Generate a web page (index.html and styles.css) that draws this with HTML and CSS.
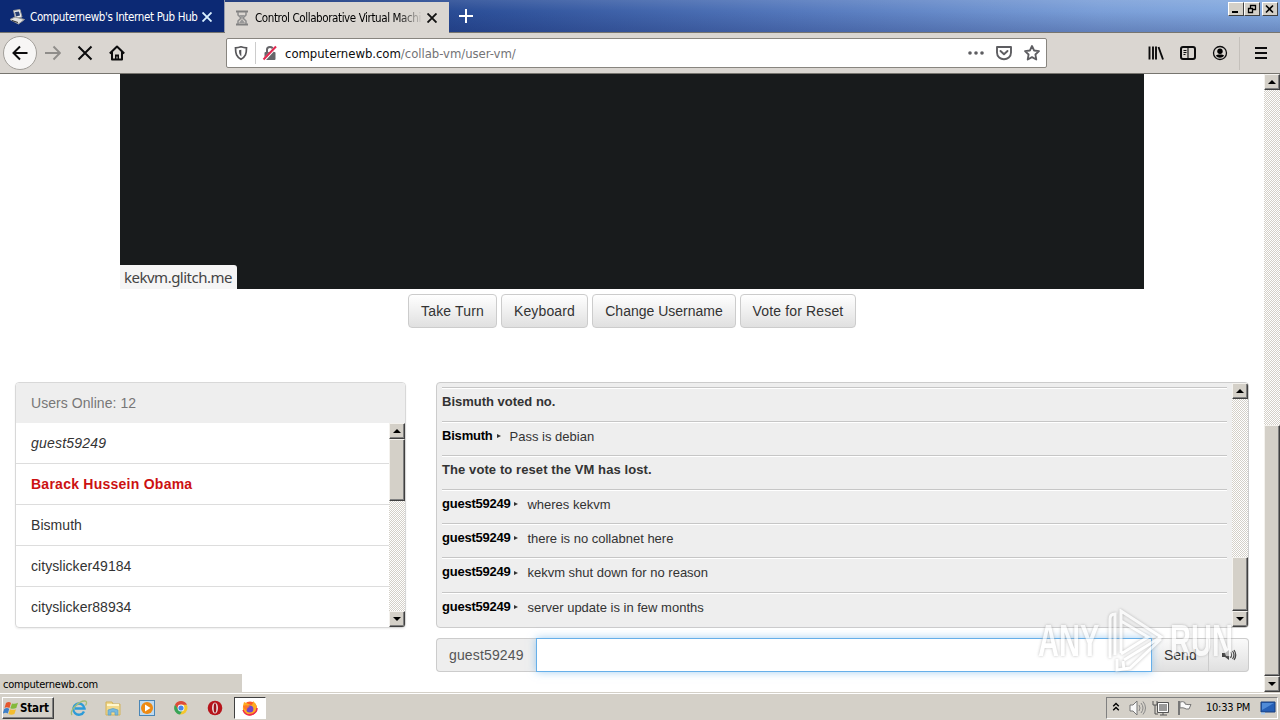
FILE: index.html
```html
<!DOCTYPE html>
<html lang="en">
<head>
<meta charset="utf-8">
<title>Control Collaborative Virtual Machines</title>
<link rel="stylesheet" href="styles.css">
</head>
<body>
<header class="tabs">
  <div class="tab tab-idle">
    <svg class="ico16" viewBox="0 0 16 16"><path d="M4.500 1.500l6.500-1 2 7.500-6.500 1.500z" fill="#f4f4f4" stroke="#999"/><path d="M6 3l4-.6 1 4.200-4 .9z" fill="#263e72"/><path d="M1 10.500l5-2.500 9.500 2.500-6 4.500z" fill="#e2e2e2" stroke="#999"/><path d="M3 11.500l6 2" stroke="#333"/></svg>
    <span class="tab-title t-one">Computernewb's Internet Pub Hub</span>
    <svg class="close" viewBox="0 0 10 10"><path d="M.5 .5l9 9M9.500 .5l-9 9" stroke="#d9f0ff" stroke-width="1.900"/></svg>
  </div>
  <div class="tab tab-on">
    <svg class="ico16" viewBox="0 0 16 16"><path d="M2 1.500h12M2 14.500h12" stroke="#808080" stroke-width="2"/><path d="M4 2v3l3 3-3 3v3M12 2v3L9 8l3 3v3" fill="none" stroke="#8c8c8c" stroke-width="1.500"/><path d="M5 5h6L8 8zM8 9l3 4H5z" fill="#999"/></svg>
    <span class="tab-title t-two">Control Collaborative Virtual Machi</span>
    <svg class="close" viewBox="0 0 10 10"><path d="M.5 .5l9 9M9.500 .5l-9 9" stroke="#111" stroke-width="1.900"/></svg>
  </div>
  <svg class="plus" viewBox="0 0 14 14"><path d="M7 0v14M0 7h14" stroke="#fff" stroke-width="2"/></svg>
  <div class="winbtns">
    <i class="wb"><svg viewBox="0 0 13 12"><path d="M3 9h6" stroke="#000" stroke-width="2"/></svg></i>
    <i class="wb"><svg viewBox="0 0 13 12"><path d="M5.500 5V2.500h5v4H8M5 2.500h6M3.500 5.500h4v4h-4zM3 5.500h5" fill="none" stroke="#000" stroke-width="1.300"/></svg></i>
    <i class="wb wb-x"><svg viewBox="0 0 13 12"><path d="M3 2.500l7 7M10 2.500l-7 7" stroke="#000" stroke-width="1.600"/></svg></i>
  </div>
</header>

<nav class="toolbar">
  <div class="back"><svg viewBox="0 0 16 16"><path d="M15.500 8H1.500M8 1.500L1.500 8 8 14.500" fill="none" stroke="#0c0c0d" stroke-width="2"/></svg></div>
  <svg class="ico16 fwd" viewBox="0 0 16 16"><path d="M0 8h14.500M8.500 1.500L15 8l-6.500 6.500" fill="none" stroke="#8f8d8a" stroke-width="1.900"/></svg>
  <svg class="ico16 stop" viewBox="0 0 16 16"><path d="M1.500 1.500l13 13M14.500 1.500l-13 13" stroke="#0c0c0d" stroke-width="2"/></svg>
  <svg class="ico16 home" viewBox="0 0 16 16"><path d="M.8 8.500L8 1.500l7.200 7M3 7v7.500h10V7" fill="none" stroke="#0c0c0d" stroke-width="2" stroke-linejoin="round"/><path d="M6 14V9.500h4V14" fill="#0c0c0d"/><path d="M8 11.500v2" stroke="#dad6d1"/></svg>
  <div class="urlbar">
    <svg class="shield" viewBox="0 0 14 16"><path d="M7 1.800c2 .7 3.500 1 5.500 1 0 6-1 9-5.500 11.500C2.500 11.800 1.500 8.800 1.500 2.800c2 0 3.500-.3 5.500-1z" fill="none" stroke="#57575a" stroke-width="1.700"/><path d="M7.300 4.800v6.700C5.500 10 5 8 5 5.200z" fill="#57575a"/></svg>
    <i class="url-sep"></i>
    <svg class="lock" viewBox="0 0 16 16"><path d="M5 7V4.500C5 1 11 1 11 4.500V7" fill="none" stroke="#66666a" stroke-width="2"/><rect x="2.500" y="7" width="11" height="8" rx="1" fill="#66666a"/><path d="M1.500 15.500L14.500 1.500" stroke="#fff" stroke-width="3"/><path d="M1.500 14.500L14 1.500" stroke="#e22850" stroke-width="2"/></svg>
    <span class="url">computernewb.com<span class="path">/collab-vm/user-vm/</span></span>
    <svg class="dots" viewBox="0 0 16 4"><circle cx="2" cy="2" r="1.800"/><circle cx="8" cy="2" r="1.800"/><circle cx="14" cy="2" r="1.800"/></svg>
    <svg class="ico16" viewBox="0 0 16 16"><path d="M1 2h14v5.500c0 9-14 9-14 0zM4.500 6L8 9.300 11.500 6" fill="none" stroke="#5d5d61" stroke-width="1.900" stroke-linejoin="round" stroke-linecap="round"/></svg>
    <svg class="ico16 star" viewBox="0 0 16 16"><path d="M8 1l2.100 4.500 4.900.6-3.600 3.400.9 5L8 12.100 3.700 14.500l.9-5L1 6.100l4.900-.6z" fill="none" stroke="#5d5d61" stroke-width="1.800" stroke-linejoin="round"/></svg>
  </div>
  <svg class="ico16 lib" viewBox="0 0 16 16"><path d="M1.500 1.500v13M5 1.500v13M8 1.500v13" stroke="#0c0c0d" stroke-width="1.900"/><path d="M10.500 2L15 14.500" stroke="#0c0c0d" stroke-width="1.900"/></svg>
  <svg class="ico16 side" viewBox="0 0 16 16"><rect x="1" y="2" width="14" height="12" rx="2" fill="none" stroke="#0c0c0d" stroke-width="2"/><path d="M8 2v12M3.500 5.500h3M3.500 7.500h3M3.500 9.500h2" stroke="#0c0c0d" stroke-width="1.100"/></svg>
  <svg class="ico16 acct" viewBox="0 0 16 16"><circle cx="8" cy="8" r="6.500" fill="none" stroke="#0c0c0d" stroke-width="1.300"/><circle cx="8" cy="6.300" r="2.700"/><path d="M3.800 10.600c1-1.600 7.400-1.600 8.400 0-2.300 3-6.100 3-8.400 0z"/></svg>
  <i class="tb-sep"></i>
  <svg class="ico16 menu" viewBox="0 0 16 16"><path d="M2 3h12M2 8h12M2 13h12" stroke="#0c0c0d" stroke-width="2"/></svg>
</nav>

<div class="viewport">
  <main class="page">
    <div class="display"><span class="vm-status">kekvm.glitch.me</span></div>
    <div class="actions">
      <button class="btn b1">Take Turn</button>
      <button class="btn b2">Keyboard</button>
      <button class="btn b3">Change Username</button>
      <button class="btn b4">Vote for Reset</button>
    </div>
    <div class="columns">
      <section class="users">
        <div class="users-head">Users Online: 12</div>
        <div class="users-body">
          <div class="users-list">
            <div class="user me">guest59249</div>
            <div class="user admin">Barack Hussein Obama</div>
            <div class="user">Bismuth</div>
            <div class="user">cityslicker49184</div>
            <div class="user">cityslicker88934</div>
          </div>
          <div class="sb"><i class="sb-btn up"></i><i class="sb-thumb thumb-users"></i><i class="sb-gap"></i><i class="sb-btn down"></i></div>
        </div>
      </section>
      <section class="chatcol">
        <div class="chat">
          <div class="messages">
            <div class="msg"><b>Bismuth voted no.</b></div>
            <div class="msg"><b class="who short">Bismuth</b><i class="arrow"></i><span>Pass is debian</span></div>
            <div class="msg"><b class="result">The vote to reset the VM has lost.</b></div>
            <div class="msg"><b class="who">guest59249</b><i class="arrow"></i><span>wheres kekvm</span></div>
            <div class="msg"><b class="who">guest59249</b><i class="arrow"></i><span>there is no collabnet here</span></div>
            <div class="msg tall"><b class="who">guest59249</b><i class="arrow"></i><span>kekvm shut down for no reason</span></div>
            <div class="msg"><b class="who">guest59249</b><i class="arrow"></i><span>server update is in few months</span></div>
          </div>
          <div class="sb"><i class="sb-btn up"></i><i class="sb-gap"></i><i class="sb-thumb thumb-chat"></i><i class="sb-btn down"></i></div>
        </div>
        <div class="compose">
          <span class="addon">guest59249</span>
          <span class="field"></span>
          <span class="send">Send</span>
          <span class="sound"><svg viewBox="0 0 16 14"><path d="M1 5h3l4-3v10L4 9H1z" fill="#444"/><path d="M9.500 4q2 3 0 6M11.500 3q3 4 0 8M13 2q3.500 5 0 10" fill="none" stroke="#444" stroke-width="1.200"/></svg></span>
        </div>
      </section>
    </div>
    <div class="statusbar">computernewb.com</div>
  </main>
  <div class="sb sb-page"><i class="sb-btn up"></i><i class="sb-gap"></i><i class="sb-thumb thumb-page"></i><i class="sb-btn down"></i></div>
</div>

<div class="watermark">
  <span>ANY</span>
  <svg viewBox="0 0 58 64"><path d="M3 49V10q0-5 5-5v41M14 44V2l40 26-37 23M14 2v10l27 16-27 17M10 50v11l13-2 31-29M17 61l-1-9" /></svg>
  <span>RUN</span>
</div>

<footer class="taskbar">
  <div class="start">
    <svg viewBox="0 0 16 16"><path d="M3 3q3-2 5 0L6.500 8q-3-1.500-5 0z" fill="#e5572d"/><path d="M9 3.500q3 1 6-.8L13.300 8q-3 1.500-6 .3z" fill="#83b93c"/><path d="M1.200 9q3-2 5 0L4.800 13.500q-2-1.500-5 0z" fill="#3e80c8"/><path d="M7 9.200q3 1.300 6 0l-1.600 4.800q-3 1.500-6 0z" fill="#f4bd2f"/></svg>
    <b>Start</b>
  </div>
  <div class="quick">
    <svg viewBox="0 0 18 18"><path d="M14 12.500A5.600 5.600 0 1 1 14.500 9.500H5" fill="none" stroke="#2c9bd8" stroke-width="2.400"/><path d="M2 16C-1 12 9 1.500 15 2c2.500.5 1.500 3 .5 4.500" fill="none" stroke="#a3bd78" stroke-width="1.300"/></svg>
    <svg viewBox="0 0 18 18"><path d="M2 3h6l1 2h7v11H2z" fill="#f3d98b" stroke="#d2b25b"/><path d="M3 6h12" stroke="#fff6cc" stroke-width="2"/><path d="M4 16v-5q5-3 10 0v5h-3v-3H7v3z" fill="#78b9dd" stroke="#5b9dc3" stroke-width=".7"/></svg>
    <svg viewBox="0 0 18 18"><rect x="1.500" y="1.500" width="15" height="15" fill="#bfdaf0" stroke="#4a86b6"/><circle cx="9" cy="9" r="6" fill="#ee8a12"/><path d="M7 5.500L12.500 9 7 12.500z" fill="#fff"/></svg>
    <svg viewBox="0 0 18 18"><circle cx="9" cy="9" r="6.500" fill="#f4c62e"/><path d="M3 5.800A6.700 6.700 0 0 1 15 5.800H9L6 11z" fill="#dd4b3b"/><path d="M3 5.800a6.500 6.500 0 0 0 5 9.700L11.500 10H6z" fill="#37a457"/><circle cx="9" cy="9" r="3.400" fill="#fff"/><circle cx="9" cy="9" r="2.600" fill="#4686e9"/></svg>
    <svg viewBox="0 0 18 18"><circle cx="9" cy="9" r="7.300" fill="#b7141b"/><ellipse cx="9" cy="9" rx="3" ry="5.500" fill="#eadada"/><ellipse cx="9" cy="9" rx="1.300" ry="4.800" fill="#9d1018"/></svg>
    <div class="task-on"><svg viewBox="0 0 18 18"><circle cx="9" cy="9.500" r="7" fill="#ff5a26"/><path d="M3 3Q0 12 5 15q8 3 11-5 0-5-4-8 0 4-2 4z" fill="#ffab20"/><circle cx="8.800" cy="10" r="3.600" fill="#7544c9"/><path d="M2 7q4-2 7 1-3 0-3 3-3 0-4-4z" fill="#ff7928"/><path d="M2 11q3 7 10 4 4-2 4-6" fill="none" stroke="#ee2f4d" stroke-width="1.500"/></svg></div>
  </div>
  <div class="tray">
    <svg class="chev" viewBox="0 0 8 10"><path d="M1.200 4.200L4 1.500l2.800 2.700M1.200 8.200L4 5.500l2.800 2.700" fill="none" stroke="#000" stroke-width="1.400"/></svg>
    <svg viewBox="0 0 18 16"><path d="M2 5h3l4-4v14l-4-4H2z" fill="#f8f8f8" stroke="#777"/><path d="M11 5q2 3 0 6M13 3q4 5 0 10M15 1.500q5 6.500 0 13" fill="none" stroke="#888"/></svg>
    <svg class="net" viewBox="0 0 18 16"><path d="M6.500 3.500h9v8h-9z" fill="#999" stroke="#fff"/><path d="M5.500 2.500h11v10h-11zM8 15h7M11 13v2" fill="none" stroke="#555"/><path d="M1 1v4h4V1M3 5v9h3" fill="none" stroke="#555"/></svg>
    <svg class="flag" viewBox="0 0 18 16"><path d="M3 1v14" stroke="#777" stroke-width="2"/><path d="M4 2q3-1 5 .5V4q3 1 6 .5l-2 4.500q-3 .5-5-1-2-.5-4 0z" fill="#fafafa" stroke="#777"/></svg>
    <span class="clock">10:33 PM</span>
    <svg class="desk" viewBox="0 0 16 14"><path d="M1 1h14v10H1z" fill="#255fb6" stroke="#193e7d"/><path d="M2 2h12L2 9z" fill="#508bd7"/><path d="M1 12.500h4" stroke="#a9cdf2" stroke-width="2"/></svg>
  </div>
</footer>
</body>
</html>
```
FILE: styles.css
```css
* { box-sizing: border-box; }
body {
  margin: 0; width: 1280px; height: 720px; overflow: hidden;
  display: flex; flex-direction: column; position: relative;
  font-family: "Liberation Sans", Arial, sans-serif; background: #fff;
}
i { font-style: normal; display: block; }
svg { display: block; flex: none; }
.ico16 { width: 16px; height: 16px; }

.tabs {
  height: 33px; flex: none; display: flex; border-bottom: 1px solid #77756f;
  background: linear-gradient(rgba(255,255,255,.1), transparent 35%, rgba(10,20,80,.22)), linear-gradient(90deg, #0a246a 0, #0e2b72 225px, #2c4f98 470px, #5579bd 800px, #7b9fd8 1100px, #85abe0 1280px);
  font: 11px "DejaVu Sans Condensed", "DejaVu Sans", sans-serif; font-stretch: condensed;
}
.tab { display: flex; align-items: center; }
.tab-idle { width: 225px; padding: 2px 0 0 9px; color: #fff; background: #0c2974; border-right: 1px solid #969bad; }
.tab-on { width: 224px; margin-top: 2px; height: 31px; padding-left: 9px; background: #dad6d1; color: #000; }
.tab-title { white-space: nowrap; margin-left: 5px; width: 167px; font-size: 11.5px; }
.t-one { letter-spacing: -.35px; }
.t-two { letter-spacing: -.4px; -webkit-mask-image: linear-gradient(90deg, #000 143px, transparent 168px); mask-image: linear-gradient(90deg, #000 143px, transparent 168px); }
.close { width: 10px; height: 10px; margin-left: 5px; }
.plus { width: 14px; height: 14px; margin: 9px 0 0 10px; }
.winbtns { margin-left: auto; display: flex; padding: 2px 2px 0 0; height: 16px; }
.wb { width: 16px; height: 14px; background: #d4d0c8; border: 1px solid; border-color: #fff #404040 #404040 #fff; }
.wb svg { width: 13px; height: 12px; }
.wb-x { margin-left: 2px; }

.toolbar { height: 41px; flex: none; background: #dad6d1; border-bottom: 1px solid #77756f; display: flex; align-items: center; padding-left: 3px; }
.back { width: 34px; height: 34px; border-radius: 50%; background: #f7f6f5; border: 1px solid #a29f9a; display: grid; place-items: center; }
.back svg { width: 16px; height: 16px; }
.fwd { margin-left: 8px; }
.stop { margin-left: 16px; }
.home { margin-left: 16px; }
.urlbar { margin-left: 101px; width: 821px; height: 30px; background: #fff; border: 1px solid #88857f; border-radius: 2px; display: flex; align-items: center; padding: 0 6px 0 7px; }
.shield { width: 14px; height: 16px; }
.url-sep { width: 1px; height: 22px; background: #ccc; margin: 0 6px 0 7px; }
.lock { width: 16px; height: 16px; }
.url { margin-left: 7px; font: 13px "DejaVu Sans Condensed", "DejaVu Sans", sans-serif; color: #0c0c0d; flex: 1; white-space: nowrap; letter-spacing: -.04px; }
.path { color: #737376; }
.dots { width: 16px; height: 4px; fill: #5d5d61; margin-right: 12px; }
.star { margin-left: 12px; }
.lib { margin-left: 101px; }
.side { margin-left: 16px; }
.acct { margin-left: 16px; }
.tb-sep { width: 1px; height: 33px; background: #c4c0bb; margin-left: 11px; }
.menu { margin-left: 13px; }

.viewport { height: 618px; flex: none; display: flex; }
.page { width: 1264px; display: flex; flex-direction: column; background: #fff; }
.display { width: 1024px; height: 215px; margin-left: 120px; background: #181b1c; display: flex; align-items: flex-end; flex: none; }
.vm-status { width: 117px; height: 24px; padding-left: 4px; background: #f5f5f5; color: #444; border-top-right-radius: 3px; font: 15px/25px "Noto Sans", sans-serif; white-space: nowrap; letter-spacing: -.5px; }
.actions { display: flex; justify-content: center; gap: 4px; margin-top: 5px; }
.btn { height: 34px; padding: 0; font: 14px "Liberation Sans", Arial, sans-serif; color: #333; background: linear-gradient(#fff, #e0e0e0); border: 1px solid #ccc; border-radius: 4px; white-space: nowrap; letter-spacing: .15px; }
.b1 { width: 89px; } .b2 { width: 87px; } .b3 { width: 144px; letter-spacing: 0; } .b4 { width: 116px; }

.columns { display: flex; padding-left: 15px; margin-top: 54px; gap: 30px; }
.users { width: 391px; height: 246px; border: 1px solid #d8d8d8; border-radius: 4px; overflow: hidden; box-shadow: 0 1px 2px rgba(0,0,0,.07); }
.users-head { height: 40px; background: #eee; color: #777; font-size: 14px; letter-spacing: .05px; line-height: 40px; padding-left: 15px; }
.users-body { display: flex; height: 204px; }
.users-list { flex: 1; }
.user { height: 41px; border-bottom: 1px solid #ddd; font-size: 14px; line-height: 41px; padding-left: 15px; color: #333; letter-spacing: .05px; }
.user:last-child { border-bottom: 0; }
.me { font-style: italic; letter-spacing: .2px; }
.admin { color: #c11; font-weight: bold; letter-spacing: .25px; }

.sb { width: 16px; display: flex; flex-direction: column; background: repeating-conic-gradient(#d4d0c8 0 25%, #fff 0 50%) 0 0 / 2px 2px; flex: none; }
.sb-btn, .sb-thumb { background: #d4d0c8; border: 1px solid; border-color: #f4f2ee #404040 #404040 #f4f2ee; box-shadow: inset -1px -1px #808080; flex: none; }
.sb-btn { height: 16px; display: grid; place-items: center; }
.sb-gap { flex: 1; }
.sb-btn::after { content: ""; border: 4px solid transparent; }
.up::after { border-top: 0; border-bottom-color: #000; }
.down::after { border-bottom: 0; border-top-color: #000; }
.thumb-users { height: 62px; }
.thumb-chat { height: 54px; }
.thumb-page { height: 251px; }

.chat { width: 813px; height: 246px; background: #eee; border: 1px solid #ccc; border-radius: 4px; display: flex; justify-content: space-between; overflow: hidden; }
.messages { width: 785px; margin: 4px 0 0 5px; color: #333; font-size: 13px; }
.msg { height: 34px; border-top: 1px solid #c6c6c6; box-shadow: inset 0 1px #fff; display: flex; align-items: center; padding-bottom: 7px; white-space: nowrap; }
.tall { height: 35px; }
.result { letter-spacing: .09px; }
.who { color: #000; letter-spacing: -.24px; }
.short { letter-spacing: -.2px; }
.arrow { border: 2.5px solid transparent; border-left: 4px solid #333; border-right: 0; margin: 2px 9px 0 4px; }
.msg span { padding-top: 2px; }
.compose { display: flex; height: 34px; margin-top: 10px; width: 813px; font-size: 14px; line-height: 32px; }
.addon { width: 100px; background: #eee; border: 1px solid #ccc; border-right: 0; border-radius: 4px 0 0 4px; color: #555; padding-left: 12px; letter-spacing: .15px; }
.field { width: 616px; border: 1px solid #66afe9; background: #fff; box-shadow: 0 0 8px rgba(102,175,233,.6); position: relative; }
.send { width: 57px; border: 1px solid #ccc; border-left: 0; background: linear-gradient(#fafafa, #e0e0e0); color: #333; padding-left: 12px; }
.sound { width: 40px; border: 1px solid #ccc; border-left: 0; border-radius: 0 4px 4px 0; background: linear-gradient(#fafafa, #e0e0e0); display: grid; place-items: center; }
.sound svg { width: 16px; height: 14px; }
.statusbar { width: 242px; height: 18px; background: #d4d0c8; margin-top: 2px; padding: 3px 0 0 3px; font: 11px/15px "DejaVu Sans Condensed", "DejaVu Sans", sans-serif; letter-spacing: -.22px; color: #000; }

.watermark { position: absolute; left: 1038px; top: 608px; width: 196px; height: 66px; display: flex; align-items: center; gap: 5px; opacity: .65; filter: drop-shadow(0 0 1.5px #999); color: #fff; font: bold 44px "Liberation Sans", Arial, sans-serif; }
.watermark span { width: 64px; transform: scaleX(.66); transform-origin: left; }
.watermark svg { width: 58px; height: 64px; fill: none; stroke: #fff; stroke-width: 3; }

.taskbar { height: 28px; flex: none; background: #d4d0c8; border-top: 1px solid #d4d0c8; box-shadow: inset 0 1px #fff; display: flex; align-items: center; padding: 2px 2px 0; font-family: "DejaVu Sans Condensed", "DejaVu Sans", sans-serif; }
.start { width: 52px; height: 22px; display: flex; align-items: center; gap: 1px; border: 1px solid; border-color: #fff #404040 #404040 #fff; box-shadow: inset -1px -1px #808080; font-size: 11.5px; letter-spacing: -.15px; }
.start svg { width: 16px; height: 16px; }
.quick { display: flex; align-items: center; margin-left: 16px; gap: 16px; }
.quick svg { width: 18px; height: 18px; }
.task-on { width: 32px; height: 22px; background: #fff; border: 1px solid; border-color: #404040 #fff #fff #404040; display: grid; place-items: center; margin-left: -6px; }
.tray { margin-left: auto; width: 172px; height: 22px; border: 1px solid; border-color: #808080 #fff #fff #808080; display: flex; align-items: center; padding-left: 5px; font-size: 11px; }
.tray svg { width: 18px; height: 16px; }
.tray .chev { width: 8px; height: 10px; margin-right: 8px; margin-bottom: 2px; }
.tray .net { margin-left: 6px; }
.tray .flag { margin-left: 6px; }
.clock { margin-left: 12px; width: 47px; white-space: nowrap; letter-spacing: -.25px; }
.tray .desk { width: 16px; height: 14px; margin-left: 7px; }
```
